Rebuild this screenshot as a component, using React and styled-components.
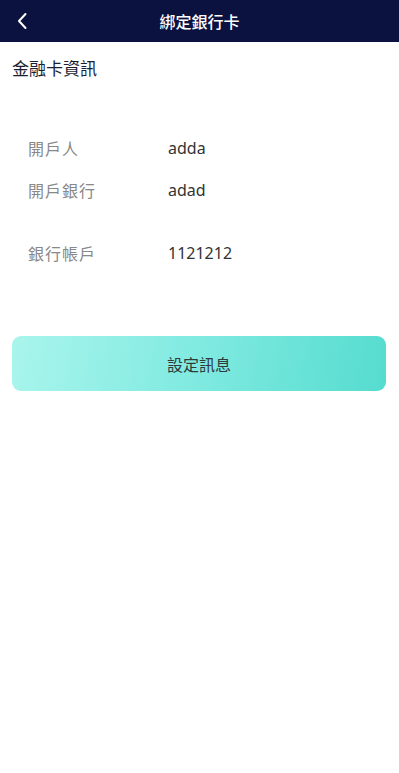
import styled, { createGlobalStyle } from "styled-components";

const GlobalStyle = createGlobalStyle`
    html, body {
        margin: 0;
        padding: 0;
        background: #ffffff;
        font-family: "Noto Sans", "Noto Sans CJK TC", sans-serif;
    }
`;

const rows = [
    { label: "開戶人", value: "adda" },
    { label: "開戶銀行", value: "adad" },
    { label: "銀行帳戶", value: "1121212", spaced: true },
];

export default function App(){
    return (
        <>
            <GlobalStyle />
            <Page>
                <Header>
                    <Back aria-label="back">
                        <svg width="12" height="18" viewBox="0 0 12 18" fill="none">
                            <path d="M9.5 2 L3 9 L9.5 16" stroke="#ffffff" strokeWidth="2" strokeLinecap="round" strokeLinejoin="round" />
                        </svg>
                    </Back>
                    <Title>綁定銀行卡</Title>
                </Header>
                <SectionTitle>金融卡資訊</SectionTitle>
                <Rows>
                    {rows.map((row) => (
                        <Row key={row.label} $spaced={row.spaced}>
                            <Label>{row.label}</Label>
                            <Value>{row.value}</Value>
                        </Row>
                    ))}
                </Rows>
                <ButtonWrap>
                    <Button>設定訊息</Button>
                </ButtonWrap>
            </Page>
        </>
    )
}

const Page = styled.div`
    width: 100%;
    min-height: 773px;
    background: #ffffff;
`;

const Header = styled.div`
    position: relative;
    height: 42px;
    background-color: #0b1240;
    display: flex;
    align-items: center;
    justify-content: center;
`;

const Back = styled.div`
    position: absolute;
    left: 14px;
    top: 11px;
    width: 16px;
    height: 20px;
    display: flex;
    align-items: center;
    justify-content: center;
`;

const Title = styled.div`
    color: #ffffff;
    font-size: 16px;
    font-weight: 500;
`;

const SectionTitle = styled.div`
    padding: 15px 12px 0;
    height: 24px;
    line-height: 24px;
    font-size: 17px;
    color: #1c1f33;
`;

const Rows = styled.div`
    padding: 46px 0 0 28px;
    display: flex;
    flex-direction: column;
`;

const Row = styled.div`
    height: 42px;
    display: flex;
    align-items: center;
    margin-top: ${(p) => (p.$spaced ? "21px" : "0")};
`;

const Label = styled.div`
    width: 140px;
    font-size: 16px;
    color: #888888;
    letter-spacing: 1px;
`;

const Value = styled.div`
    font-size: 16px;
    color: #333333;
`;

const ButtonWrap = styled.div`
    padding: 62px 13px 0 12px;
`;

const Button = styled.div`
    height: 55px;
    border-radius: 9px;
    background: linear-gradient(100deg, #a9f5ec 0%, #84ebe2 45%, #55dccf 100%);
    display: flex;
    align-items: center;
    justify-content: center;
    font-size: 16px;
    color: #2f3a3a;
`;
